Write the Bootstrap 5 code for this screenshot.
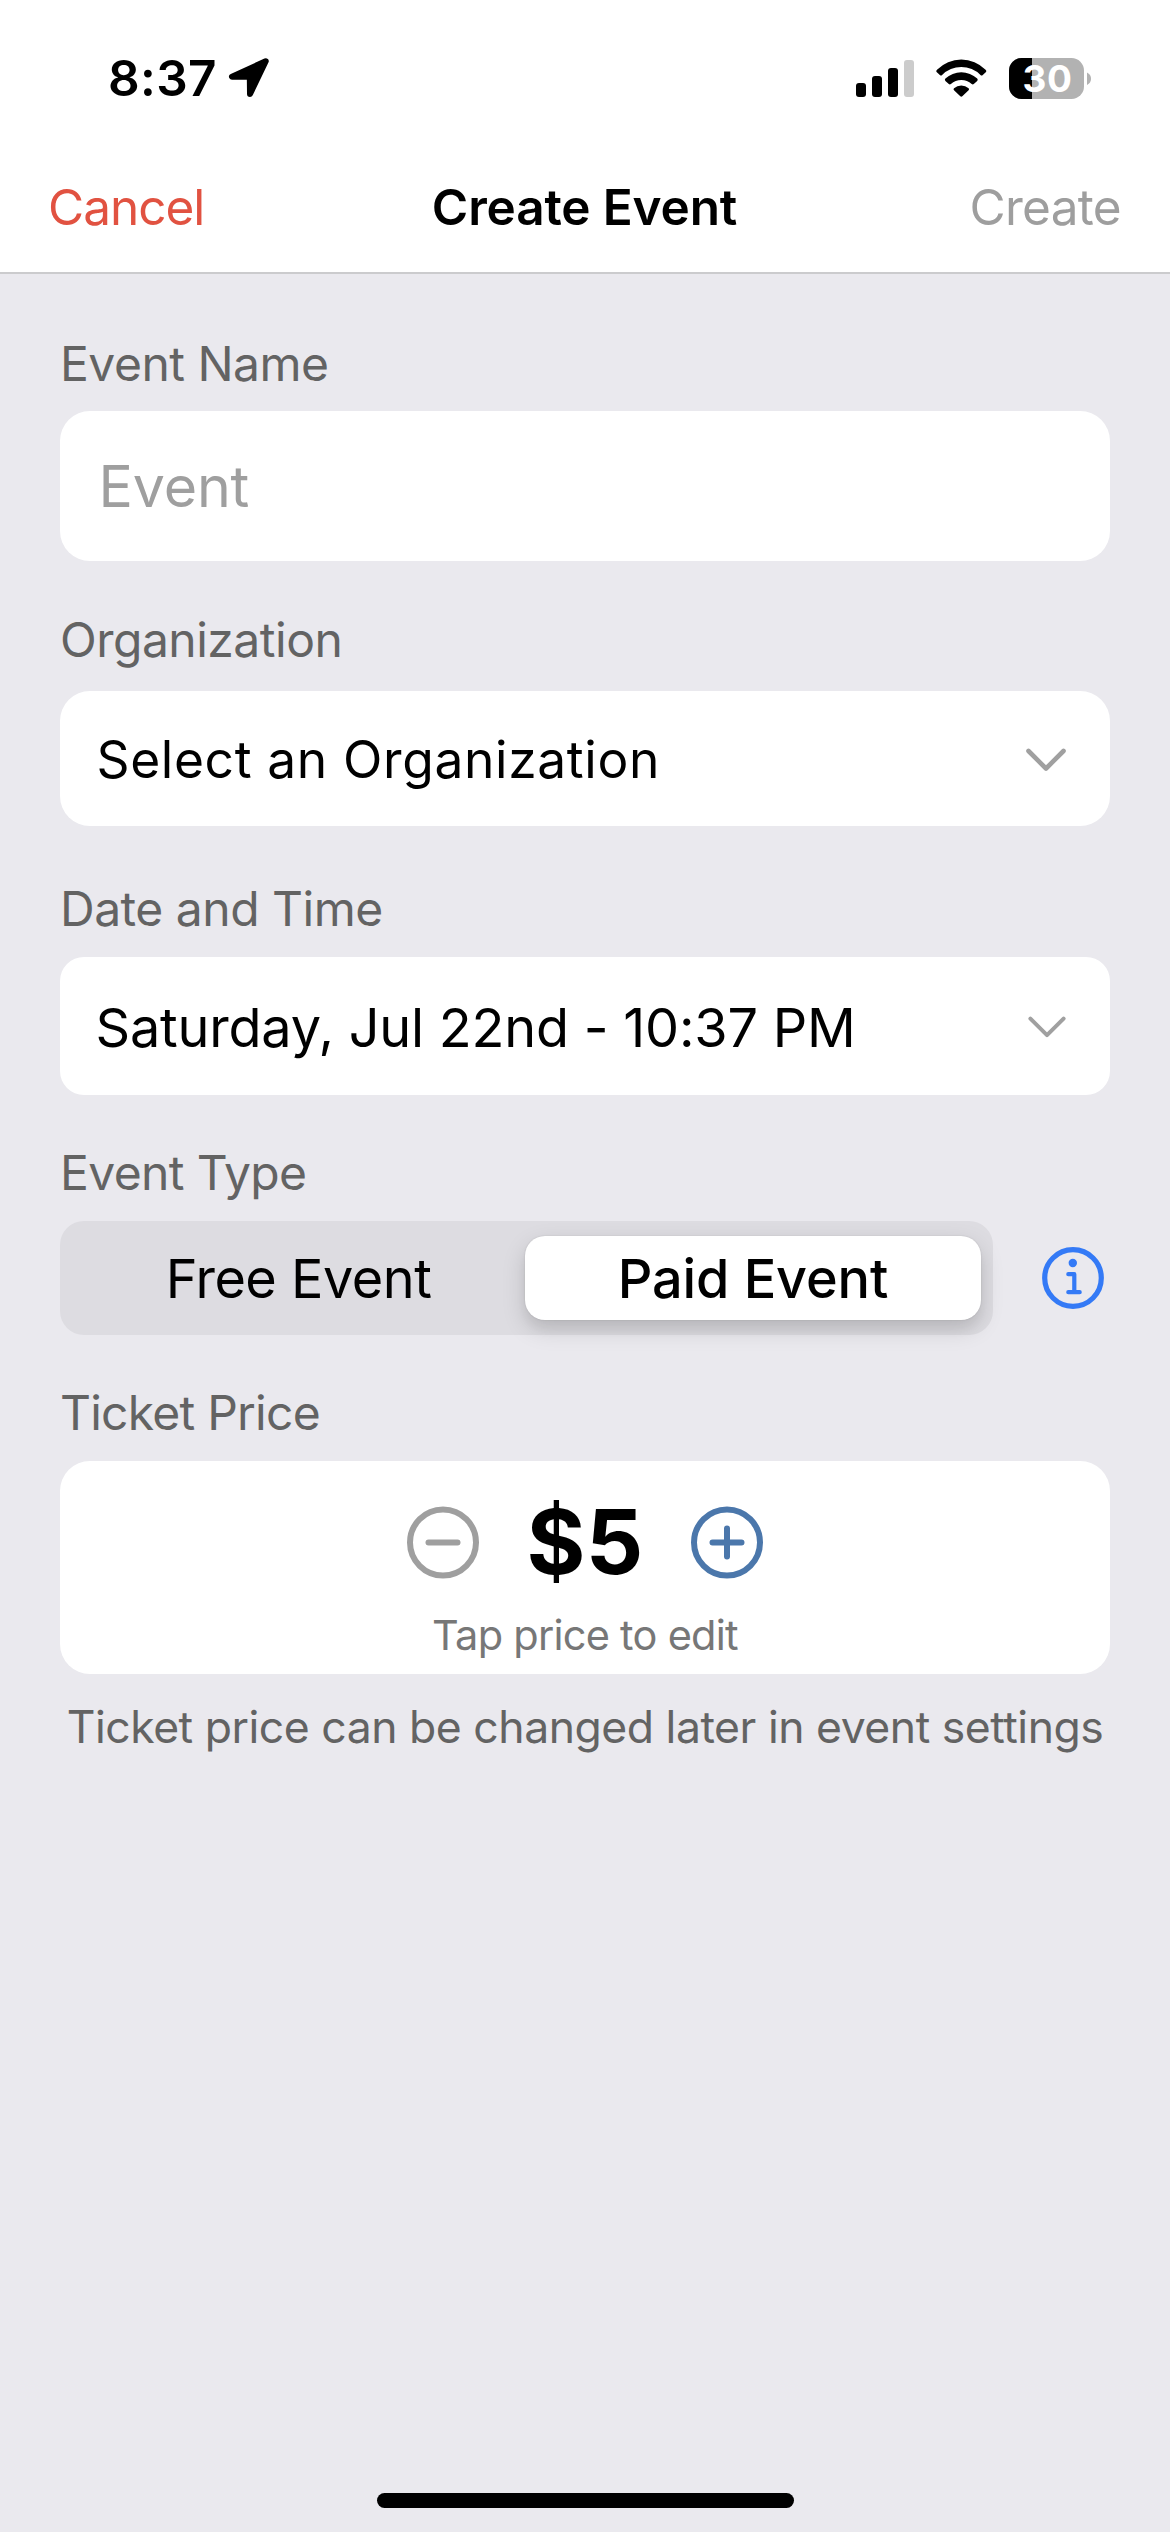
<!DOCTYPE html>
<html lang="en">
<head>
<meta charset="utf-8">
<meta name="viewport" content="width=device-width, initial-scale=1">
<title>Create Event</title>
<link href="https://cdn.jsdelivr.net/npm/bootstrap@5.3.0/dist/css/bootstrap.min.css" rel="stylesheet">
<style>
  body { font-family: Inter, "Liberation Sans", sans-serif; background: #eae9ee; color: #000; }
  svg { display: block; flex: none; overflow: visible; }
  .screen { min-height: 2532px; }
  .app-header { height: 274px; border-bottom: 2px solid #cbcbcd; }
  .status { height: 144px; padding: 12px 79px 0 108px; }
  .clock { font-size: 49.5px; font-weight: 600; letter-spacing: .35px; line-height: 60px; }
  .status-left { gap: 12px; }
  .status-right { gap: 22px; }
  .topnav { height: 126px; padding: 0 49px 0 48px; font-size: 49.5px; line-height: 60px; }
  .heading { font-weight: 600; letter-spacing: -.15px; }
  .topnav button, .picker, .stepper button, .info-btn, .seg button { border: 0; background: none; padding: 0; font-size: inherit; line-height: inherit; color: inherit; }
  .topnav .cancel { color: #e15241; letter-spacing: -1px; }
  .topnav .create { color: #9e9e9e; letter-spacing: -.7px; }
  .form-area { padding: 61px 60px 0; }
  .field-label { margin: 49.5px 0 18.5px; font-size: 48px; line-height: 58px; letter-spacing: -.5px; color: #636363; }
  .field-label.first { margin: 0 0 18px; }
  .field-label.org { margin-bottom: 22.3px; }
  .field-label.date { margin-top: 54.2px; }
  .field-label.type { letter-spacing: -.63px; }
  .field-label.price { letter-spacing: -.76px; }
  .panel { background: #fff; border-radius: 30px; }
  .name-input { height: 150px; border: 0; border-radius: 30px; padding: 0 38.4px; font-size: 57.3px; letter-spacing: -.14px; background: #fff; }
  .name-input::placeholder { color: #9f9f9f; }
  .form-area .picker { background: #fff; }
  .form-area .picker-org { height: 135.3px; border-radius: 30px; padding: 3px 44px 0 36.5px; font-size: 51.5px; letter-spacing: .64px; }
  .form-area .picker-date { height: 138px; border-radius: 24px; padding: 3px 44px 0 35.6px; font-size: 54px; letter-spacing: -.22px; }
  .seg { width: 933px; height: 114px; border-radius: 24px; background: #dddce1; padding: 15px 12px; font-size: 54px; line-height: 66px; }
  .seg button { width: 453px; height: 84px; padding-top: 3px; letter-spacing: -.5px; }
  .seg button.on { width: 456px; font-weight: 500; letter-spacing: -.11px; background: #fff; border-radius: 20px; box-shadow: 0 9px 24px rgba(0,0,0,.14), 0 9px 12px rgba(0,0,0,.05), 0 0 2px rgba(0,0,0,.12); }
  .info-btn { margin-right: 6px; }
  .price-panel { height: 213px; padding-top: 45px; }
  .stepper { height: 73px; gap: 48px; }
  .amount { font-size: 90px; font-weight: 700; line-height: 73px; padding-bottom: 2px; letter-spacing: .2px; }
  .hint { margin-top: 31px; font-size: 41.5px; line-height: 50px; letter-spacing: -.74px; color: #777; }
  .footnote { margin: 26px -20px 0; font-size: 44.5px; line-height: 54px; letter-spacing: -.47px; color: #636363; white-space: nowrap; }
  .home-bar { width: 417px; height: 15px; border-radius: 8px; background: #000; margin-bottom: 24px; }
</style>
</head>
<body>
<div class="screen d-flex flex-column">
  <header class="app-header bg-white">
    <div class="status d-flex align-items-center justify-content-between">
      <div class="status-left d-flex align-items-center">
        <span class="clock">8:37</span>
        <svg width="40" height="40" viewBox="0 0 40 40"><path d="M36.7 3.2 3 18.8H20.8L21 36Z" stroke="#000" stroke-width="6" stroke-linejoin="round"/></svg>
      </div>
      <div class="status-right d-flex align-items-center">
        <svg width="58" height="37" viewBox="0 0 58 37"><rect y="23" width="10" height="14" rx="3"/><rect x="16" y="16" width="10" height="21" rx="3"/><rect x="32" y="8" width="10" height="29" rx="3"/><rect x="48" width="10" height="37" rx="3" fill="#ccc"/></svg>
        <svg width="51" height="37" viewBox="0 0 51 37"><path d="M1 9.8A34 34 0 0 1 49.6 9.8Q51 11 50 12L46.5 15.2Q45.5 16 44.5 15A27 27 0 0 0 6.1 15Q5.1 16 4.1 15.2L.6 12Q-.4 11 1 9.8ZM9.4 18.6A23.2 23.2 0 0 1 41.2 18.6Q42.3 19.8 41.2 20.9L37.8 24.1Q36.8 25 35.7 24.1A15.5 15.5 0 0 0 14.9 24.1Q13.8 25 12.8 24.1L9.4 20.9Q8.3 19.8 9.4 18.6ZM18 28.2A11.5 11.5 0 0 1 32.6 28.2Q33.6 29.2 32.6 30.2L26.3 36.3Q25.3 37.2 24.3 36.3L18 30.2Q17 29.2 18 28.2Z"/></svg>
        <svg width="82" height="41" viewBox="0 0 82 41">
          <rect width="75" height="41" rx="12.5" fill="#b2b2b2"/>
          <path d="M23 0H12.5A12.5 12.5 0 0 0 0 12.5V28.5A12.5 12.5 0 0 0 12.5 41H23Z"/>
          <path d="M78 14.5Q82 16.5 82 20.7T78 27Z" fill="#b2b2b2"/>
          <text x="13.5" y="34" font-family="Inter, sans-serif" font-size="37" font-weight="700" letter-spacing=".6" fill="#fff">30</text>
        </svg>
      </div>
    </div>
    <nav class="topnav d-flex align-items-center">
      <div class="col text-start"><button class="cancel" type="button">Cancel</button></div>
      <div class="heading">Create Event</div>
      <div class="col text-end"><button class="create" type="button">Create</button></div>
    </nav>
  </header>

  <main class="form-area">
    <div class="field-label first">Event Name</div>
    <input class="name-input form-control" type="text" placeholder="Event" aria-label="Event Name">

    <div class="field-label org">Organization</div>
    <button class="picker picker-org w-100 d-flex align-items-center justify-content-between" type="button">
      <span>Select an Organization</span>
      <svg width="40" height="24" viewBox="0 0 40 24"><path d="M2.5 3 20 20.5 37.5 3" fill="none" stroke="#a0a0a0" stroke-width="4.6" stroke-linecap="round" stroke-linejoin="round"/></svg>
    </button>

    <div class="field-label date">Date and Time</div>
    <button class="picker picker-date w-100 d-flex align-items-center justify-content-between" type="button">
      <span>Saturday, Jul 22nd - 10:37 PM</span>
      <svg width="38" height="22" viewBox="0 0 38 22"><path d="M2.4 2.6 19 19.2 35.6 2.6" fill="none" stroke="#a0a0a0" stroke-width="4" stroke-linecap="round" stroke-linejoin="round"/></svg>
    </button>

    <div class="field-label type">Event Type</div>
    <div class="d-flex align-items-center justify-content-between">
      <div class="seg d-flex" role="group">
        <button type="button">Free Event</button>
        <button type="button" class="on">Paid Event</button>
      </div>
      <button class="info-btn" type="button" aria-label="About event types">
        <svg width="62" height="62" viewBox="0 0 62 62" fill="none" stroke="#347af6" stroke-width="4.2" stroke-linecap="round" stroke-linejoin="round"><circle cx="31" cy="31" r="28.3" stroke-width="5.2"/><path d="M26.3 27.2H32.3V45M26.3 45.2H37.7"/><circle cx="30.8" cy="16" r="4.2" fill="#347af6" stroke="none"/></svg>
      </button>
    </div>

    <div class="field-label price">Ticket Price</div>
    <div class="price-panel panel text-center">
      <div class="stepper d-flex align-items-center justify-content-center">
        <button type="button" aria-label="Decrease price"><svg width="72" height="73" viewBox="0 0 72 73" fill="none" stroke="#9f9f9f" stroke-width="6" stroke-linecap="round"><circle cx="36" cy="36.5" r="33"/><path d="M21.5 36.5H50.5"/></svg></button>
        <span class="amount">$5</span>
        <button type="button" aria-label="Increase price"><svg width="72" height="73" viewBox="0 0 72 73" fill="none" stroke="#4b77ab" stroke-width="6" stroke-linecap="round"><circle cx="36" cy="36.5" r="33"/><path d="M21.5 36.5H50.5M36 22.5V50.5"/></svg></button>
      </div>
      <div class="hint">Tap price to edit</div>
    </div>
    <div class="footnote text-center">Ticket price can be changed later in event settings</div>
  </main>

  <div class="home-bar mt-auto mx-auto"></div>
</div>
<script src="https://cdn.jsdelivr.net/npm/bootstrap@5.3.0/dist/js/bootstrap.bundle.min.js"></script>
</body>
</html>
